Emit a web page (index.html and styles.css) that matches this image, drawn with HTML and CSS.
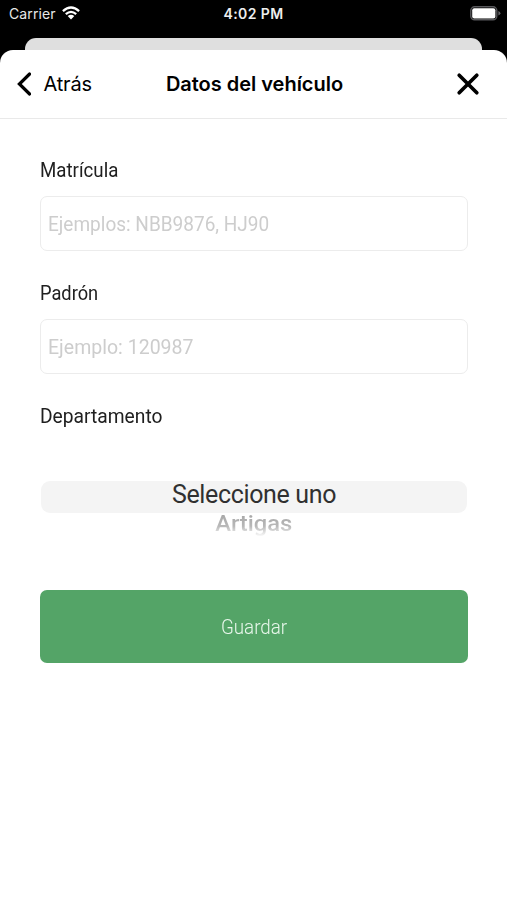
FILE: index.html
```html
<!DOCTYPE html>
<html lang="es">
<head>
<meta charset="utf-8">
<title>Datos del vehículo</title>
<link rel="stylesheet" href="styles.css">
</head>
<body>
<div class="status">
  <div class="carrier"><span class="carrier-name">Carrier</span>
    <svg class="wifi" width="18" height="14" viewBox="0 0 18 14" fill="none" stroke="#fff" stroke-width="2.3"><path d="M.9 5.1Q9-2 17.1 5.1M3.8 8.1Q9 3.6 14.2 8.1"/><path fill="#fff" stroke="none" d="M5.7 10.1Q9 7.4 12.3 10.1L9 13.5Z"/></svg>
  </div>
  <span class="time">4:02 PM</span>
  <svg class="battery" width="31" height="15" viewBox="0 0 31 15"><rect x=".8" y=".8" width="26" height="13" rx="3.8" fill="none" stroke="#59595c" stroke-width="1.4"/><rect x="2.2" y="2.2" width="23.2" height="10.2" rx="2" fill="#fff"/><path d="M28.4 5q2 .8 2 2.3t-2 2.3z" fill="#66666a"/></svg>
</div>
<div class="behind"></div>
<main class="sheet">
  <header class="nav">
    <div class="back"><svg width="16" height="26" viewBox="0 0 16 26" fill="none" stroke="#000" stroke-width="3.2" stroke-linecap="round" stroke-linejoin="miter"><path d="M14.6 3L4.4 13l10.2 10"/></svg><span class="back-label">Atrás</span></div>
    <h1 class="title">Datos del vehículo</h1>
    <svg class="close" width="24" height="24" viewBox="0 0 24 24" fill="none" stroke="#000" stroke-width="3.7" stroke-linecap="round"><path d="M3.2 3.2l17.6 17.6M20.8 3.2L3.2 20.8"/></svg>
  </header>
  <form class="form">
    <label class="label"><span class="fit matricula">Matrícula</span></label>
    <div class="field"><span class="fit hint-a">Ejemplos: NBB9876, HJ90</span></div>
    <label class="label"><span class="fit padron">Padrón</span></label>
    <div class="field"><span class="fit hint-b">Ejemplo: 120987</span></div>
    <label class="label"><span class="fit depto">Departamento</span></label>
    <div class="picker">
      <div class="selected"><span class="sel-text">Seleccione uno</span></div>
      <div class="next"><span class="next-text">Artigas</span></div>
    </div>
    <div class="save"><span class="save-text">Guardar</span></div>
  </form>
</main>
</body>
</html>
```
FILE: styles.css
```css
* { box-sizing: border-box; }
body { margin: 0; height: 900px; overflow: hidden; background: #000; font-family: Roboto, sans-serif; display: flex; flex-direction: column; }
.status { height: 38px; flex: none; display: grid; grid-template-columns: 1fr auto 1fr; align-items: start; color: #fff; padding: 6px 6px 0 9px; }
.carrier { display: flex; gap: 6px; color: #e8e8e8; font: 14px/16px Inter, sans-serif; letter-spacing: .1px; }
.time { font: 600 14px/16px Inter, sans-serif; letter-spacing: .4px; color: #eee; margin-left: -3px; }
.battery { justify-self: end; }
.behind { height: 12px; flex: none; margin: 0 25px; background: #dfdfdf; border-radius: 11px 11px 0 0; }
.sheet { flex: 1; background: #fff; border-radius: 13px 13px 0 0; }
.nav { height: 69px; border-bottom: 1px solid #e9e9e9; display: grid; grid-template-columns: 1fr auto 1fr; align-items: center; padding: 0 27px 0 15px; font-family: Inter, sans-serif; }
.back { display: flex; align-items: center; gap: 12.5px; font-size: 20px; }
.back-label { letter-spacing: -.2px; }
.title { margin: 0 -7px 0 7px; font-size: 20px; font-weight: 600; letter-spacing: -.02px; }
.close { justify-self: end; }
.form { padding: 38px 39px 0 40px; display: flex; flex-direction: column; }
.label { height: 26px; line-height: 26px; font-size: 21px; color: #202020; white-space: nowrap; margin-bottom: 13px; }
.fit { display: inline-block; transform-origin: left; white-space: nowrap; }
.matricula { transform: scaleX(.89); }
.padron { transform: scaleX(.87); }
.depto { transform: scaleX(.915); }
.hint-a { transform: scaleX(.905); }
.hint-b { transform: scaleX(.93); }
.field { height: 55px; border: 1px solid #ececec; border-radius: 7px; display: flex; align-items: center; padding-left: 7px; margin-bottom: 29px; font-size: 21px; color: #cdcdcd; }
.picker { height: 148px; padding: 39px 1px 0; display: flex; flex-direction: column; }
.selected { height: 32px; flex: none; background: #f4f4f4; border-radius: 9px; text-align: center; font-size: 25px; line-height: 27px; letter-spacing: -.35px; color: #303030; }
.next { height: 28px; text-align: center; font-size: 22px; line-height: 22px; font-weight: 500; }
.next-text { display: inline-block; height: 24px; transform: scaleX(1.08); color: transparent; background: linear-gradient(#a5a5a5, #b8b8b8 55%, #e8e8e8 85%, #fff); background-clip: text; }
.save { height: 73px; background: #54a467; border-radius: 7px; display: flex; align-items: center; justify-content: center; color: #e8f7eb; font-size: 21px; font-weight: 300; }
.save-text { transform: scaleX(.895); }
```
